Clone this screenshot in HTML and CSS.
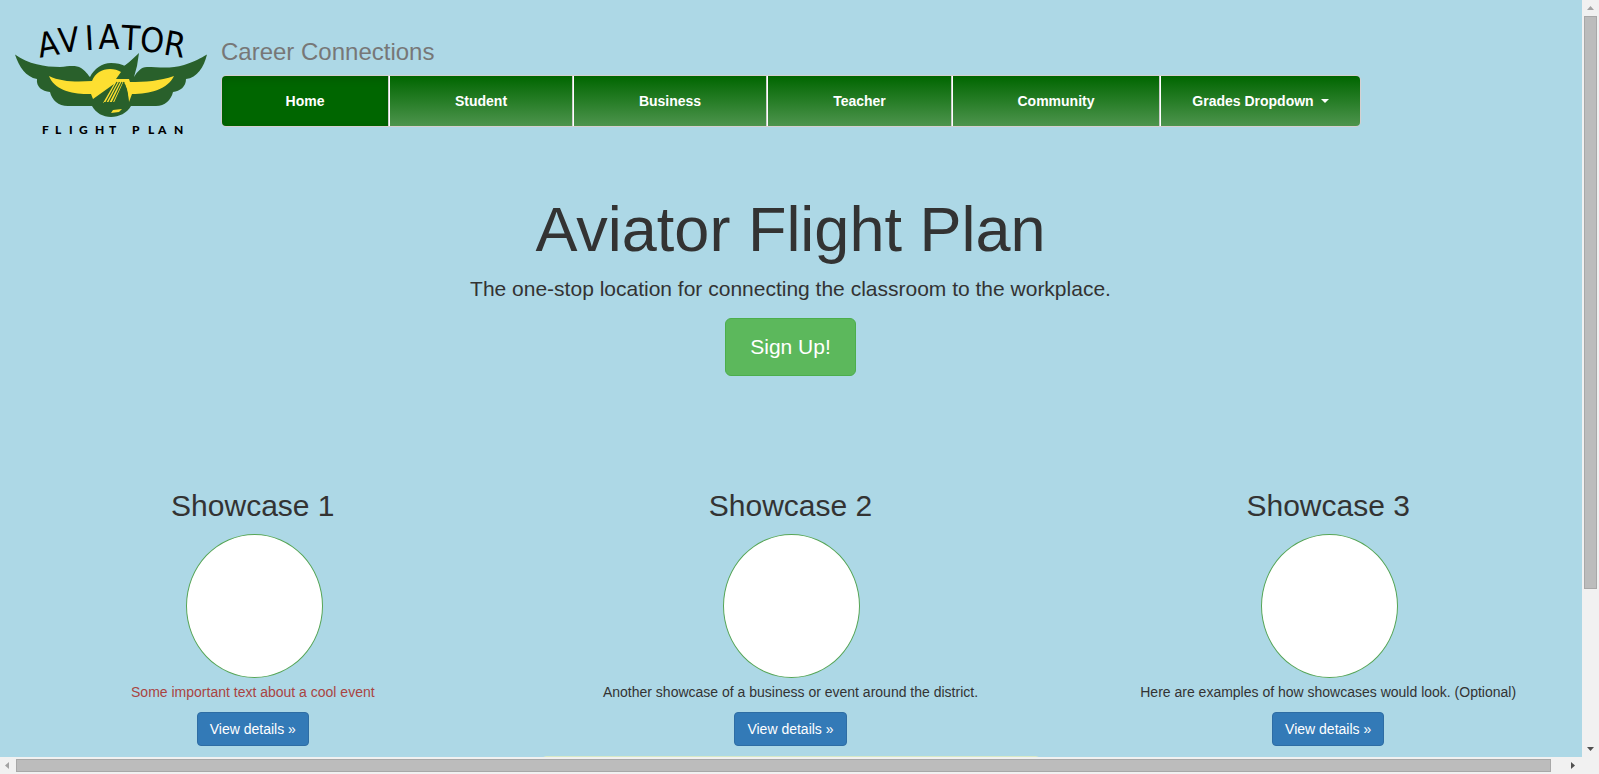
FILE: index.html
```html
<!DOCTYPE html>
<html lang="en">
<head>
<meta charset="utf-8">
<title>Aviator Flight Plan</title>
<link rel="stylesheet" href="styles.css">
</head>
<body>
<div class="window">
  <div class="page">
    <header class="header">
      <svg class="logo" viewBox="15 8 192 120" role="img" aria-label="Aviator Flight Plan">
        <path fill="#29602b" d="M15 44.500C28 54 45 57 60 57C70 56 76 55 81 58C86 61 88 65 90 67C94 59 102 53 111 53C117 53 121 54 125 56L139 43L137 56L134 67C137 62 141 57 147 57C158 57 171 59 184 55C194 52 201 48 207 44.500C204 57 197 68 186 69C186 77 180 81 173 82C171 90 165 96 156 96L131 96C127 103 119 107 111 107C103 107 96 103 92 96L68 96C58 96 52 90 50 82C42 81 36 77 37 69C26 67 19 57 15 44.500Z"/>
        <path fill="#fddf31" d="M49 66C61 72 77 72 92 71C95 63 102 59 110 59C114 59 118 60 121 62L116 69L129 69L130 72C145 72 160 71 174 66C168 79 150 84 132 84L129 92L127 79L124 72L114 94L103 93L114 74L93 89L91 84C74 85 54 80 49 66Z"/>
        <g stroke="#29602b" stroke-width="1.200">
          <path d="M117 72L105 94M119.500 72L108 94M122 72L111 95M124 72L113 96"/>
        </g>
        <path fill="#29602b" d="M102 96L104 92L116 92L125 74L128 84L129 96Z"/>
        <path fill="#29602b" d="M119 69L124 56L137 47L130 69Z"/>
        <path fill="#fddf31" d="M113 100L122 99L119 102L111 103Z"/>
        <g class="logo-name">
          <text transform="translate(50 46) rotate(-10)">A</text>
          <text transform="translate(70 42) rotate(-6)">V</text>
          <text transform="translate(90 40) rotate(-3)">I</text>
          <text transform="translate(109 39)">A</text>
          <text transform="translate(130 40) rotate(3)">T</text>
          <text transform="translate(151 42) rotate(6)">O</text>
          <text transform="translate(173 46) rotate(10)">R</text>
        </g>
        <text class="logo-tag" y="124" x="42 55 69 79 95 109 119 132 148 158 174">FLIGHT PLAN</text>
      </svg>
      <div class="brand">
        <h3 class="brand-title">Career Connections</h3>
        <nav>
          <ul class="nav">
            <li><a class="nav-item active" href="#">Home</a></li>
            <li><a class="nav-item" href="#">Student</a></li>
            <li><a class="nav-item" href="#">Business</a></li>
            <li><a class="nav-item" href="#">Teacher</a></li>
            <li><a class="nav-item" href="#">Community</a></li>
            <li><button class="nav-item" type="button">Grades Dropdown <span class="caret"></span></button></li>
          </ul>
        </nav>
      </div>
    </header>

    <section class="hero">
      <h1>Aviator Flight Plan</h1>
      <p class="lead">The one-stop location for connecting the classroom to the workplace.</p>
      <a class="btn btn-signup" href="#">Sign Up!</a>
    </section>

    <div class="showcases">
      <section class="showcase">
        <h2>Showcase 1</h2>
        <div class="photo"></div>
        <p class="danger">Some important text about a cool event</p>
        <a class="btn btn-details" href="#">View details »</a>
      </section>
      <section class="showcase">
        <h2>Showcase 2</h2>
        <div class="photo"></div>
        <p>Another showcase of a business or event around the district.</p>
        <a class="btn btn-details" href="#">View details »</a>
      </section>
      <section class="showcase">
        <h2>Showcase 3</h2>
        <div class="photo"></div>
        <p>Here are examples of how showcases would look. (Optional)</p>
        <a class="btn btn-details" href="#">View details »</a>
      </section>
    </div>
    <div class="panel"></div>
  </div>

  <div class="scroll scroll-y">
    <svg class="arrow" viewBox="0 0 17 16"><path fill="#a3a3a3" d="M5 10L8.500 6L12 10Z"/></svg>
    <div class="track"><div class="thumb"></div></div>
    <svg class="arrow" viewBox="0 0 17 16"><path fill="#505050" d="M5 6L12 6L8.500 10Z"/></svg>
  </div>
  <div class="scroll scroll-x">
    <svg class="arrow" viewBox="0 0 16 17"><path fill="#a3a3a3" d="M9 5L5 8.500L9 12Z"/></svg>
    <div class="track"><div class="thumb"></div></div>
    <svg class="arrow" viewBox="0 0 16 17"><path fill="#505050" d="M5 5L9 8.500L5 12Z"/></svg>
  </div>
</div>
</body>
</html>
```
FILE: styles.css
```css
* {
  box-sizing: border-box;
}

body {
  margin: 0;
  font: 14px/20px "Liberation Sans", Arial, sans-serif;
  color: #333;
}

h1, h2, h3, p, ul {
  margin: 0;
  padding: 0;
  font-weight: normal;
}

.window {
  display: grid;
  grid-template: minmax(0, 1fr) 17px / minmax(0, 1fr) 17px;
  height: 100vh;
  background: #f1f1f1;
}

.page {
  overflow: hidden;
  background: #add8e6;
}

/* Header */
.header {
  display: flex;
  gap: 14px;
  padding: 18px 15px 0;
}

.logo {
  flex: none;
  width: 192px;
  height: 120px;
}

.logo-name {
  font: 34px "DejaVu Sans Condensed", "DejaVu Sans", sans-serif;
  text-anchor: middle;
}

.logo-tag {
  font: 900 12px Lato, sans-serif;
}

.brand {
  flex: 1;
  max-width: 1140px;
  padding-top: 21px;
}

.brand-title {
  margin-bottom: 10px;
  font-size: 24px;
  line-height: 26px;
  color: #777;
}

.nav {
  display: grid;
  grid-template-columns: 167fr 184fr 194fr 185fr 208fr 200fr;
  overflow: hidden;
  list-style: none;
  border: 1px solid #d5cfd0;
  border-radius: 5px;
}

.nav li + li {
  border-left: 1px solid #fff;
}

.nav-item {
  display: flex;
  align-items: center;
  justify-content: center;
  width: 100%;
  height: 50px;
  padding: 0;
  border: 0;
  border-right: 1px solid #ccc;
  background: linear-gradient(#060, #4d944d);
  font: bold 14px/20px "Liberation Sans", Arial, sans-serif;
  color: #fff;
  text-decoration: none;
}

.nav li:last-child .nav-item {
  border-right: 0;
}

.nav-item.active {
  background: #060;
  box-shadow: inset 0 3px 8px rgba(0, 0, 0, 0.125);
}

.caret {
  margin-left: 7px;
  border: 4px solid transparent;
  border-top-color: #fff;
  border-bottom: 0;
}

/* Hero */
.hero {
  padding: 57px 16px 113px 15px;
  text-align: center;
}

.hero h1 {
  margin-bottom: 10px;
  font-size: 63px;
  line-height: 69px;
}

.lead {
  margin-bottom: 15px;
  font-size: 21px;
  line-height: 29px;
}

.btn {
  display: inline-block;
  border: 1px solid;
  color: #fff;
  text-decoration: none;
  vertical-align: top;
}

.btn-signup {
  padding: 14px 24px;
  border-color: #4cae4c;
  border-radius: 6px;
  background: #5cb85c;
  font-size: 21px;
  line-height: 28px;
}

/* Showcases */
.showcases {
  display: grid;
  grid-template-columns: repeat(3, 1fr);
  margin: 0 -15px 10px -16px;
}

.showcase {
  padding: 0 15px;
  text-align: center;
}

.showcase h2 {
  margin-bottom: 12px;
  font-size: 30px;
  line-height: 33px;
}

.photo {
  display: inline-block;
  width: 137px;
  height: 144px;
  margin: 0 0 4px 3px;
  border: 1px solid #56a556;
  border-radius: 50%;
  background: #fff;
  vertical-align: top;
}

.showcase p {
  margin-bottom: 10px;
}

.showcase .danger {
  color: #a94442;
}

.btn-details {
  padding: 6px 12px;
  border-color: #2e6da4;
  border-radius: 4px;
  background: #337ab7;
}

.panel {
  max-width: 498px;
  height: 40px;
  margin: 0 auto;
  border: 1px solid #d6e9c6;
  border-radius: 4px;
}

/* Scroll bars */
.scroll {
  display: flex;
}

.scroll-y {
  flex-direction: column;
}

.arrow {
  flex: none;
}

.scroll-y .arrow {
  width: 17px;
  height: 16px;
}

.scroll-x .arrow {
  width: 16px;
  height: 17px;
}

.track {
  flex: 1;
}

.thumb {
  border: 1px solid #a8a8a8;
  background: #bcbcbc;
}

.scroll-y .track {
  padding: 0 2px;
}

.scroll-y .thumb {
  height: 79%;
}

.scroll-x .track {
  padding: 2px 0;
}

.scroll-x .thumb {
  width: 99%;
  height: 13px;
}
```
